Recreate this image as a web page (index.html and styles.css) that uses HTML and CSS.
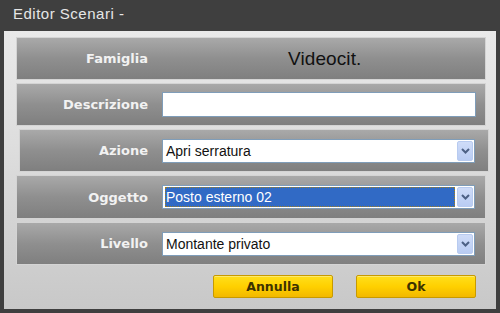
FILE: index.html
```html
<!DOCTYPE html>
<html>
<head>
<meta charset="utf-8">
<link rel="stylesheet" href="styles.css">
</head>
<body>
<div class="titlebar">Editor Scenari -</div>
<div class="panel">
  <div class="row">
    <div class="label">Famiglia</div>
    <div class="value">Videocit.</div>
  </div>
  <div class="row">
    <div class="label">Descrizione</div>
    <div class="input"></div>
  </div>
  <div class="row shifted">
    <div class="label">Azione</div>
    <div class="select">
      <span class="sel-text">Apri serratura</span>
      <span class="drop"><svg width="9" height="6" viewBox="0 0 9 6"><path d="M1 1 L4.5 4.5 L8 1" fill="none" stroke="#4d6185" stroke-width="2"/></svg></span>
    </div>
  </div>
  <div class="row">
    <div class="label">Oggetto</div>
    <div class="select">
      <span class="sel-text focused">Posto esterno 02</span>
      <span class="drop"><svg width="9" height="6" viewBox="0 0 9 6"><path d="M1 1 L4.5 4.5 L8 1" fill="none" stroke="#4d6185" stroke-width="2"/></svg></span>
    </div>
  </div>
  <div class="row">
    <div class="label">Livello</div>
    <div class="select">
      <span class="sel-text">Montante privato</span>
      <span class="drop"><svg width="9" height="6" viewBox="0 0 9 6"><path d="M1 1 L4.5 4.5 L8 1" fill="none" stroke="#4d6185" stroke-width="2"/></svg></span>
    </div>
  </div>
  <div class="buttons">
    <div class="btn">Annulla</div>
    <div class="btn">Ok</div>
  </div>
</div>
</body>
</html>
```

FILE: styles.css
```css
html, body {
  margin: 0;
  padding: 0;
}
body {
  width: 500px;
  height: 313px;
  background: #3f3f3f;
  overflow: hidden;
}
.titlebar {
  height: 31px;
  box-sizing: border-box;
  padding: 5px 0 0 13px;
  font-family: "Liberation Sans", Arial, sans-serif;
  font-size: 15px;
  letter-spacing: 0.5px;
  color: #e6e6e6;
  line-height: 17px;
}
.panel {
  margin: 0 4px;
  height: 278px;
  box-sizing: border-box;
  padding: 6px 10px 0 12px;
  background: linear-gradient(#e9e9e9, #dedede 40%, #c8c8c8);
  display: flex;
  flex-direction: column;
  gap: 3px;
}
.row {
  height: 43px;
  box-sizing: border-box;
  border: 1px solid #d4d4d4;
  background: linear-gradient(#a9a9a9, #8f8f8f 50%, #7f7f7f);
  display: flex;
  align-items: center;
}
.row.shifted {
  margin-left: 3px;
  margin-right: -3px;
}
.row:nth-child(4) {
  height: 44px;
}
.label {
  width: 131px;
  text-align: right;
  font-family: "DejaVu Sans", Verdana, sans-serif;
  font-weight: bold;
  font-size: 13px;
  color: #f2f2f2;
  margin-right: 14px;
}
.shifted .label {
  width: 128px;
}
.value {
  margin-left: 126px;
  font-family: "Liberation Sans", Arial, sans-serif;
  font-size: 19px;
  color: #111;
  letter-spacing: 0.1px;
}
.input {
  width: 314px;
  height: 25px;
  box-sizing: border-box;
  background: #fff;
  border: 1px solid #7f9db9;
}
.select {
  width: 313px;
  height: 24px;
  box-sizing: border-box;
  background: #fff;
  border: 1px solid #7f9db9;
  display: flex;
  align-items: center;
  padding: 1px 1px 1px 2px;
  font-family: "Liberation Sans", Arial, sans-serif;
  font-size: 14px;
  color: #111;
}
.sel-text {
  flex: 1;
  height: 20px;
  line-height: 20px;
  padding-left: 1px;
  box-sizing: border-box;
}
.sel-text.focused {
  background: #316ac5;
  color: #fff;
  outline: 1px dotted #a08020;
  outline-offset: -1px;
  margin-right: 2px;
}
.drop {
  width: 16px;
  height: 20px;
  box-sizing: border-box;
  border: 1px solid #b8cbf0;
  border-radius: 2px;
  background: linear-gradient(#cfdcf8, #b9ccf3);
  display: flex;
  align-items: center;
  justify-content: center;
}
.buttons {
  display: flex;
  justify-content: flex-end;
  gap: 23px;
  margin-top: 7px;
  padding-right: 10px;
}
.btn {
  width: 120px;
  height: 23px;
  box-sizing: border-box;
  border: 1px solid #c79a00;
  border-radius: 2px;
  background: linear-gradient(#ffdf1c, #ffd000 50%, #f2b800);
  box-shadow: inset 0 1px 0 #ffe96a;
  font-family: "DejaVu Sans", Verdana, sans-serif;
  font-weight: bold;
  font-size: 12.5px;
  color: #3d3200;
  text-align: center;
  line-height: 21px;
}
```
